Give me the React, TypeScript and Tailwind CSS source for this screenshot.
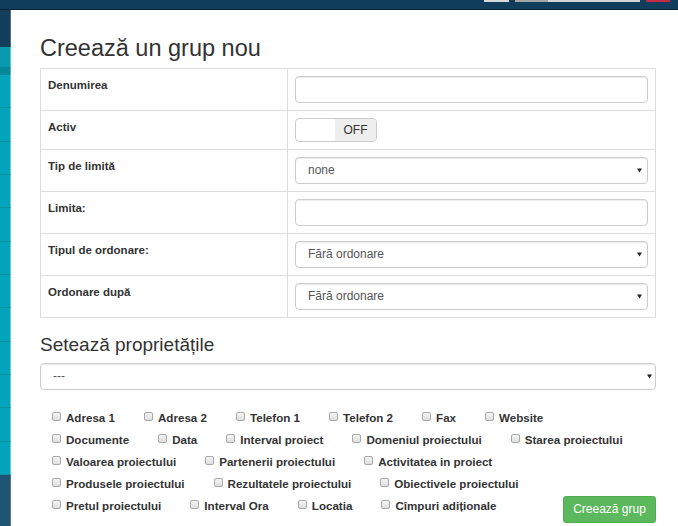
import React from "react";

const cbRows: string[][] = [
  ["Adresa 1", "Adresa 2", "Telefon 1", "Telefon 2", "Fax", "Website"],
  ["Documente", "Data", "Interval proiect", "Domeniul proiectului", "Starea proiectului"],
  ["Valoarea proiectului", "Partenerii proiectului", "Activitatea in proiect"],
  ["Produsele proiectului", "Rezultatele proiectului", "Obiectivele proiectului"],
  ["Pretul proiectului", "Interval Ora", "Locatia", "Cîmpuri adiționale"],
];

function Arrow() {
  return (
    <svg width="5" height="5" viewBox="0 0 5 5" className="shrink-0">
      <polygon points="0,0.5 5,0.5 2.5,4.5" fill="#222" />
    </svg>
  );
}

function SelectBox({ value }: { value: string }) {
  return (
    <div className="h-[27px] border border-[#ccc] rounded-[4px] flex items-center justify-between pl-[12px] pr-[5px] text-[12px] text-[#555] shadow-[inset_0_1px_1px_rgba(0,0,0,0.075)] bg-white">
      <span>{value}</span>
      <Arrow />
    </div>
  );
}

function TextInput() {
  return (
    <div className="h-[27px] border border-[#ccc] rounded-[4px] bg-white shadow-[inset_0_1px_1px_rgba(0,0,0,0.075)]" />
  );
}

function Toggle() {
  return (
    <div className="w-[82px] h-[24px] border border-[#ccc] rounded-[4px] flex overflow-hidden bg-white">
      <div className="flex-1" />
      <div className="w-[41px] bg-[#eee] flex items-center justify-center text-[12px] text-[#333]">OFF</div>
    </div>
  );
}

function Row({ label, children, first }: { label: string; children: React.ReactNode; first?: boolean }) {
  return (
    <div className={first ? "flex" : "flex border-t border-[#ddd]"}>
      <div className="w-[247px] shrink-0 border-r border-[#ddd] pl-[7px] pt-[8px] text-[11.5px] leading-[16px] font-bold text-[#333]">
        {label}
      </div>
      <div className="flex-1 px-[7px] py-[7px]">{children}</div>
    </div>
  );
}

function Check({ label }: { label: string }) {
  return (
    <div className="h-[22px] flex items-center gap-[5px]">
      <span className="w-[9px] h-[9px] mb-[2px] rounded-[2px] border border-[#a8a8a8] bg-gradient-to-b from-[#f5f5f5] to-[#dedede] shrink-0" />
      <span className="text-[11.6px] font-bold text-[#333] whitespace-nowrap">{label}</span>
    </div>
  );
}

export default function App() {
  const tealItems = Array.from({ length: 12 });
  return (
    <div className="w-[678px] h-[526px] overflow-hidden bg-white flex flex-col font-['Liberation_Sans',Arial,sans-serif]">
      {/* top bar */}
      <div className="h-[10px] shrink-0 bg-[#0f3d5b] border-b border-[#0a2231] flex items-start justify-end pr-[8px]">
        <div className="w-[25px] h-[2px] bg-[#d9d9d9]" />
        <div className="w-[33px] h-[2px] bg-[#a6a6a6] ml-[6px]" />
        <div className="w-[92px] h-[2px] bg-[#d4d4d4]" />
        <div className="w-[24px] h-[2px] bg-[#c22a45] ml-[6px]" />
      </div>

      <div className="flex flex-1 min-h-0">
        {/* left strip */}
        <div className="w-[11px] shrink-0 flex flex-col">
          <div className="h-[37px] bg-[#143f5c] border-r border-[#4f6e82]" />
          <div className="h-[20px] bg-[#0a99ad] border-r border-[#5ccbd8]" />
          <div className="h-[8px] bg-[#07889a] border-r border-[#4fb7c4]" />
          <div className="h-[400px] flex flex-col">
            {tealItems.map((_, i) => (
              <div key={i} className="flex-1 bg-[#04a5ba] border-r border-[#5fd0dd] border-b border-b-[#0b8fa1]" />
            ))}
          </div>
          <div className="flex-1 bg-[#1f5573] border-r border-[#56758a]" />
        </div>

        {/* panel */}
        <div className="flex-1 pl-[29px] pr-[22px]">
          <h1 className="mt-[26px] text-[23.5px] leading-[1.1] text-[#333]">Creează un grup nou</h1>

          <div className="mt-[6px] border border-[#ddd]">
            <Row label="Denumirea" first>
              <TextInput />
            </Row>
            <Row label="Activ">
              <Toggle />
            </Row>
            <Row label="Tip de limită">
              <SelectBox value="none" />
            </Row>
            <Row label="Limita:">
              <TextInput />
            </Row>
            <Row label="Tipul de ordonare:">
              <SelectBox value="Fără ordonare" />
            </Row>
            <Row label="Ordonare după">
              <SelectBox value="Fără ordonare" />
            </Row>
          </div>

          <h2 className="mt-[17px] text-[19px] leading-[1.1] text-[#333]">Setează proprietățile</h2>

          <div className="mt-[7px] h-[27px] border border-[#ccc] rounded-[4px] flex items-center justify-between pl-[12px] pr-[3px] text-[12px] text-[#555] shadow-[inset_0_1px_1px_rgba(0,0,0,0.075)]">
            <span>---</span>
            <Arrow />
          </div>

          <div className="mt-[17px] pl-[12px] flex flex-col">
            {cbRows.map((row, ri) => (
              <div key={ri} className="flex items-start gap-x-[29px]">
                {row.map((l) => (
                  <Check key={l} label={l} />
                ))}
                {ri === cbRows.length - 1 && (
                  <button className="ml-auto mt-[1px] h-[27px] w-[93px] rounded-[3px] bg-[#5cb85c] border border-[#4cae4c] text-white text-[12px] flex items-center justify-center">
                    Creează grup
                  </button>
                )}
              </div>
            ))}
          </div>
        </div>
      </div>
    </div>
  );
}
